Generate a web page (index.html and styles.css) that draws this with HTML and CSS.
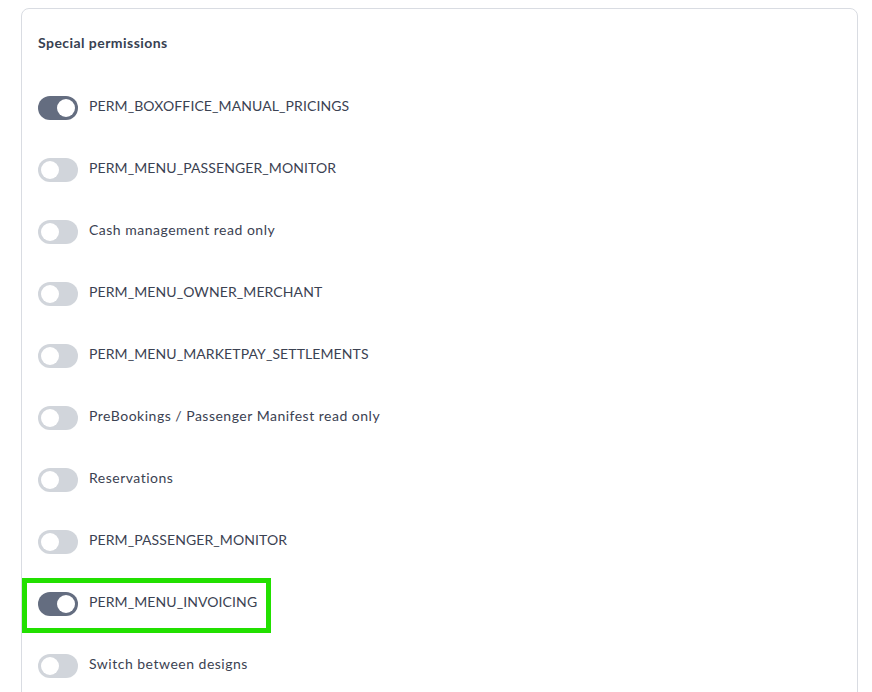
FILE: index.html
```html
<!DOCTYPE html>
<html lang="en">
<head>
  <meta charset="UTF-8">
  <meta name="viewport" content="width=device-width, initial-scale=1.0">
  <title>Special permissions</title>
  <link rel="stylesheet" href="styles.css">
</head>
<body>
  <div class="card">
    <h3 class="card-title">Special permissions</h3>
    <ul class="perm-list">
      <li class="perm-row">
        <span class="toggle on"><span class="knob"></span></span>
        <span class="perm-label code">PERM_BOXOFFICE_MANUAL_PRICINGS</span>
      </li>
      <li class="perm-row">
        <span class="toggle"><span class="knob"></span></span>
        <span class="perm-label code">PERM_MENU_PASSENGER_MONITOR</span>
      </li>
      <li class="perm-row">
        <span class="toggle"><span class="knob"></span></span>
        <span class="perm-label">Cash management read only</span>
      </li>
      <li class="perm-row">
        <span class="toggle"><span class="knob"></span></span>
        <span class="perm-label code">PERM_MENU_OWNER_MERCHANT</span>
      </li>
      <li class="perm-row">
        <span class="toggle"><span class="knob"></span></span>
        <span class="perm-label code">PERM_MENU_MARKETPAY_SETTLEMENTS</span>
      </li>
      <li class="perm-row">
        <span class="toggle"><span class="knob"></span></span>
        <span class="perm-label">PreBookings / Passenger Manifest read only</span>
      </li>
      <li class="perm-row">
        <span class="toggle"><span class="knob"></span></span>
        <span class="perm-label">Reservations</span>
      </li>
      <li class="perm-row">
        <span class="toggle"><span class="knob"></span></span>
        <span class="perm-label code">PERM_PASSENGER_MONITOR</span>
      </li>
      <li class="perm-row highlighted">
        <span class="toggle on"><span class="knob"></span></span>
        <span class="perm-label code">PERM_MENU_INVOICING</span>
        <span class="highlight-box"></span>
      </li>
      <li class="perm-row">
        <span class="toggle"><span class="knob"></span></span>
        <span class="perm-label">Switch between designs</span>
      </li>
    </ul>
  </div>
</body>
</html>
```

FILE: styles.css
```css
* {
  margin: 0;
  padding: 0;
  box-sizing: border-box;
}

body {
  font-family: Lato, 'Open Sans', sans-serif;
  background-color: #fff;
  color: #3b4252;
  margin: 8px 14px 0 21px;
  overflow: hidden;
}

.card {
  border: 1px solid #d9dce2;
  border-radius: 8px;
  padding: 24px 16px 40px;
  background: #fff;
}

.card-title {
  font-size: 14px;
  font-weight: 700;
  line-height: 20px;
  letter-spacing: 0.45px;
  color: #374151;
  margin-bottom: 24px;
}

.perm-list {
  list-style: none;
}

.perm-row {
  position: relative;
  display: flex;
  align-items: center;
  gap: 11px;
  padding: 19px 0;
}

.perm-label {
  font-size: 14px;
  line-height: 24px;
  letter-spacing: 0.5px;
  color: #3b4252;
  margin-top: -4px;
}

.perm-label.code {
  letter-spacing: 0.1px;
}

/* Toggle switch */
.toggle {
  position: relative;
  flex: none;
  width: 40px;
  height: 24px;
  border-radius: 12px;
  background-color: #d1d5db;
}

.toggle .knob {
  position: absolute;
  top: 3px;
  left: 3px;
  width: 18px;
  height: 18px;
  border-radius: 50%;
  background-color: #fff;
}

.toggle.on {
  background-color: #646d80;
}

.toggle.on .knob {
  left: 19px;
}

/* Marker drawn over the selected row */
.highlight-box {
  position: absolute;
  left: -16px;
  top: 5px;
  width: 249px;
  height: 55px;
  border: 5px solid #22e000;
}
```
